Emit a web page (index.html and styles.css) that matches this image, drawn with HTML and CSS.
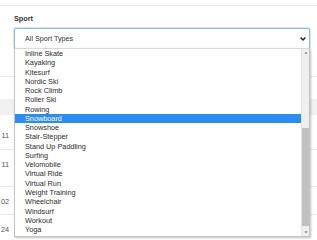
FILE: index.html
```html
<!DOCTYPE html>
<html>
<head>
<meta charset="utf-8">
<link rel="stylesheet" href="styles.css">
</head>
<body>
<div class="page">
  <div class="topbar"></div>
  <section class="filters">
    <label class="field-label">Sport</label>
    <div class="select">
      <span class="select-value">All Sport Types</span>
      <svg class="chev" width="6" height="4" viewBox="0 0 6 4"><path d="M0.6 0.6 L3 3 L5.4 0.6" fill="none" stroke="#222" stroke-width="1.4"/></svg>
    </div>
  </section>
  <div class="divider"></div>
  <table class="acts">
    <thead><tr><th class="c-date"></th><th></th></tr></thead>
    <tbody>
      <tr class="r1"><td class="c-date">11</td><td></td></tr>
      <tr class="r2"><td class="c-date">11</td><td></td></tr>
      <tr class="r3"><td class="c-date">02</td><td></td></tr>
      <tr class="r4"><td class="c-date">24</td><td></td></tr>
    </tbody>
  </table>

  <div class="dropdown">
    <ul class="options">
      <li>Inline Skate</li>
      <li>Kayaking</li>
      <li>Kitesurf</li>
      <li>Nordic Ski</li>
      <li>Rock Climb</li>
      <li>Roller Ski</li>
      <li>Rowing</li>
      <li class="selected">Snowboard</li>
      <li>Snowshoe</li>
      <li>Stair-Stepper</li>
      <li>Stand Up Paddling</li>
      <li>Surfing</li>
      <li>Velomobile</li>
      <li>Virtual Ride</li>
      <li>Virtual Run</li>
      <li>Weight Training</li>
      <li>Wheelchair</li>
      <li>Windsurf</li>
      <li>Workout</li>
      <li>Yoga</li>
    </ul>
    <div class="scrollbar">
      <svg class="arrow" width="8" height="7" viewBox="0 0 8 7"><path d="M2.5 4.5 L4 3 L5.5 4.5 Z" fill="#555"/></svg>
      <div class="track"><div class="thumb"></div></div>
      <svg class="arrow" width="8" height="7" viewBox="0 0 8 7"><path d="M2.5 2.5 L4 4 L5.5 2.5 Z" fill="#555"/></svg>
    </div>
  </div>
</div>
</body>
</html>
```

FILE: styles.css
```css
* { box-sizing: border-box; }
html, body { margin: 0; padding: 0; background: #fff; }
body {
  font-family: "Liberation Sans", Arial, sans-serif;
  color: #333;
  overflow: hidden;
  width: 317px;
  height: 240px;
}
.page { position: relative; width: 317px; height: 240px; overflow: hidden; }
.topbar { height: 6px; border-bottom: 1px solid #ececec; }
.filters { padding: 8px 7px 0 14px; }
.field-label {
  display: block;
  font-size: 7.3px;
  font-weight: bold;
  color: #333;
  line-height: 9px;
  height: 14px;
}
.select {
  display: flex;
  align-items: center;
  justify-content: space-between;
  height: 21px;
  border: 1px solid #8fbbe8;
  border-radius: 2px;
  box-shadow: 0 0 0 1px #d3e5f7;
  padding: 0 3px 0 10px;
  background: #fff;
}
.select-value { font-size: 7.2px; color: #333; }
.chev { display: block; }
.divider { height: 28px; border-bottom: 1px solid #e9e9e9; }
.acts {
  border-collapse: collapse;
  width: 100%;
  margin-top: 22px;
  font-size: 7.3px;
}
.acts th {
  background: #f1f1f1;
  height: 16px;
  padding: 0;
}
.acts td {
  border-bottom: 1px solid #eaeaea;
  padding: 10px 0 0 0;
  color: #555;
  vertical-align: top;
  line-height: 9px;
}
.acts .c-date { width: 10px; text-align: right; padding-right: 1px; }
.r1 td { height: 34px; padding-top: 16px; }
.r2 td { height: 37px; }
.r3 td { height: 28px; }
.r4 td { height: 28px; }

.dropdown {
  position: absolute;
  left: 14px;
  top: 48px;
  width: 296px;
  height: 189px;
  border: 1px solid #c4c4c4;
  border-top-color: #d8d8d8;
  background: #fff;
  box-shadow: 1px 1px 2px rgba(0,0,0,0.25);
  display: flex;
}
.options {
  list-style: none;
  margin: 0;
  padding: 0;
  flex: 1;
}
.options li {
  font-size: 7.3px;
  line-height: 9.27px;
  height: 9.27px;
  padding-left: 10px;
  color: #2b2b2b;
  white-space: nowrap;
}
.options li.selected { background: #2a8cf6; color: #fff; }
.scrollbar {
  width: 8px;
  background: #efefef;
  border-left: 1px solid #e4e4e4;
  display: flex;
  flex-direction: column;
}
.arrow { display: block; flex: none; }
.track { flex: 1; display: flex; flex-direction: column; justify-content: flex-end; padding: 0 0 3px 0; }
.thumb { height: 98px; background: #c1c1c1; }
```
